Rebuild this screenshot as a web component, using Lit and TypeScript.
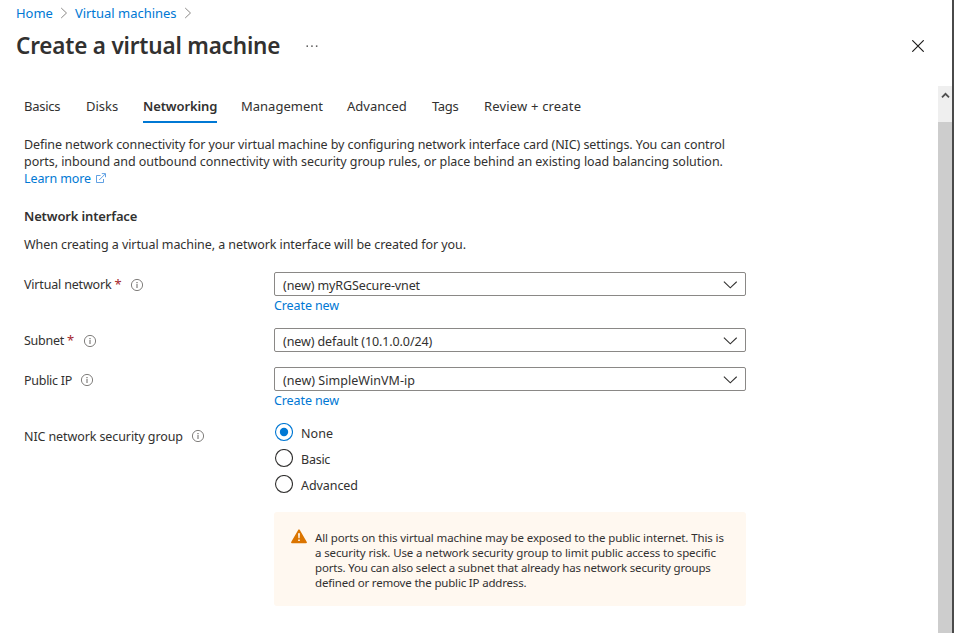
import { LitElement, html, css, svg, nothing } from "lit";

const infoIcon = html`<svg class="info" width="14" height="14" viewBox="0 0 14 14" aria-hidden="true">
  <circle cx="7" cy="7" r="5.6" fill="none" stroke="#7a7876" stroke-width="0.95"/>
  <rect x="6.5" y="4" width="1" height="1.2" fill="#55534f"/>
  <rect x="6.5" y="6" width="1" height="4" fill="#6b6967"/>
</svg>`;

const crumbChevron = html`<svg class="crumb-sep" width="8" height="12" viewBox="0 0 8 12" aria-hidden="true">
  <path d="M1.2 1 L6.5 6 L1.2 11" fill="none" stroke="#8a8886" stroke-width="1"/>
</svg>`;

const downChevron = html`<svg width="14" height="8" viewBox="0 0 14 8" aria-hidden="true">
  <path d="M0.9 0.7 L7.3 6.8 L13.7 0.7" fill="none" stroke="#323130" stroke-width="1.15"/>
</svg>`;

class FieldLabel extends LitElement {
  static properties = { text: {}, required: { type: Boolean }, tight: {} };
  static styles = css`
    :host { display: flex; align-items: center; height: 17px; line-height: 17px; white-space: nowrap; }
    .vnet { letter-spacing: -0.18px; }
    .subnet { letter-spacing: -0.25px; }
    .ip { letter-spacing: -0.27px; }
    .nsg { letter-spacing: -0.1px; }
    .star { color: #a4262c; margin-left: 3px; font-size: 13px; width: 7px; }
    .info { margin-left: 8px; display: block; }
    .star + .info { margin-left: 9px; }
    .ip + .info, .nsg + .info { margin-top: -1px; }
  `;
  declare text: string;
  declare required: boolean;
  declare tight: string;
  render() {
    return html`<span class=${this.tight}>${this.text}</span>${this.required ? html`<span class="star">*</span>` : nothing}${infoIcon}`;
  }
}
customElements.define("field-label", FieldLabel);

class AppRoot extends LitElement {
  static styles = css`
    :host {
      display: block; width: 954px; height: 633px; overflow: hidden; background: #fff;
      font: 12.5px/17px "Noto Sans", "Open Sans", sans-serif; color: #323130;
      letter-spacing: -0.07px;
    }
    * { box-sizing: border-box; }
    svg { display: block; flex: none; }
    .window { height: 633px; border-right: 2px solid #4a4a4a; display: flex; flex-direction: column; white-space: nowrap; }
    .top { height: 86px; flex: none; padding: 5px 28px 0 16px; }
    a { color: #0078d4; text-decoration: none; }
    .crumbs { display: flex; align-items: center; height: 16px; font-size: 13px; line-height: 16px; letter-spacing: -0.02px; }
    .crumb-sep { margin: 0 7px; }
    .titlebar { display: flex; align-items: center; height: 30px; margin-top: 10px; }
    h1 { margin: 0; font-size: 22.5px; line-height: 30px; font-weight: 600; letter-spacing: -0.19px; width: 290px; }
    .close { margin-left: auto; }
    .body { flex: 1; display: flex; min-height: 0; }
    .content { flex: 1; padding: 11px 0 0 24px; }
    .bar { width: 14px; background: #cdcdcd; }
    .up { height: 36px; background: #efefef; padding: 5px 0 0 3px; }
    .tabs { display: flex; height: 26px; font-size: 13px; line-height: 18px; letter-spacing: 0; }
    .tab { height: 26px; margin-right: 25px; }
    .tab.basics { width: 37px; letter-spacing: -0.25px; }
    .tab.disks { width: 32px; }
    .tab.on { width: 74px; font-weight: 600; letter-spacing: -0.12px; border-bottom: 2px solid #0078d4; margin-right: 24px; }
    .tab.management { width: 82px; margin-right: 24px; }
    .tab.advanced { width: 60px; }
    .tab.tags { width: 27px; letter-spacing: -0.35px; }
    .tab.review { letter-spacing: 0.17px; }
    .intro { margin-top: 13px; letter-spacing: -0.09px; }
    .intro .second { letter-spacing: -0.05px; }
    .learn { display: flex; align-items: center; letter-spacing: -0.1px; }
    .learn svg { margin-left: 5px; }
    h2 { margin: 20px 0 0; font-size: 13px; line-height: 18px; font-weight: 600; letter-spacing: -0.15px; }
    .note { margin-top: 11px; }
    .row { display: flex; }
    .row.vnet { margin-top: 19px; height: 56px; }
    .row.subnet { height: 39px; }
    .row.ip { height: 56px; }
    field-label { width: 250px; margin-top: 4px; }
    .row.ip field-label, .row.nsg field-label { margin-top: 5px; }
    .field { width: 472px; }
    .select { height: 24px; border: 1px solid #8a8886; border-radius: 2px; padding: 4px 8px 0; display: flex; justify-content: space-between; letter-spacing: -0.11px; }
    .select svg { margin-top: 3.5px; }
    .select .wide { letter-spacing: 0.04px; }
    .create { display: block; margin-top: 1px; letter-spacing: -0.1px; }
    .radio { display: flex; height: 26px; }
    .radio .label { margin: 2px 0 0 8px; }
    .radio .roomy { letter-spacing: 0.05px; }
    .radio .close-set { letter-spacing: -0.25px; }
    .warn { margin-top: 11px; height: 94px; background: #fff8f0; border-radius: 3px; display: flex; padding: 18px 0 0 16px; font-size: 11.5px; line-height: 15px; letter-spacing: -0.12px; }
    .warn .text { margin-left: 8px; }
    .warn .tight { letter-spacing: -0.18px; }
    .warn svg { margin-top: -1px; }
  `;

  select(value: string, wide = false) {
    return html`<div class="select"><span class=${wide ? "wide" : ""}>${value}</span>${downChevron}</div>`;
  }

  radio(label: string, on: boolean, cls: string) {
    return html`<div class="radio">
      <svg width="19" height="19" viewBox="0 0 19 19">
        <circle cx="10" cy="9" r="8.5" fill="#fff" stroke=${on ? "#0078d4" : "#323130"} stroke-width="1.1"/>
        ${on ? svg`<circle cx="10" cy="9" r="4.2" fill="#0078d4"/>` : nothing}
      </svg><span class="label ${cls}">${label}</span></div>`;
  }

  render() {
    return html`
      <div class="window">
        <div class="top">
          <nav class="crumbs"><a>Home</a>${crumbChevron}<a>Virtual machines</a>${crumbChevron}</nav>
          <div class="titlebar">
            <h1>Create a virtual machine</h1>
            <svg width="12" height="2" viewBox="0 0 12 2"><path d="M0.5 0.5h1.5v1.2h-1.5zM5.2 0.5h1.5v1.2h-1.5zM9.9 0.5h1.5v1.2h-1.5z" fill="#323130"/></svg>
            <svg class="close" width="12" height="12" viewBox="0 0 12 12"><path d="M0.3 0.3L11.7 11.7M11.7 0.3L0.3 11.7" stroke="#1b1a19" stroke-width="1.15"/></svg>
          </div>
        </div>
        <div class="body">
          <div class="content">
            <div class="tabs">
              <span class="tab basics">Basics</span><span class="tab disks">Disks</span><span class="tab on">Networking</span><span class="tab management">Management</span><span class="tab advanced">Advanced</span><span class="tab tags">Tags</span><span class="tab review">Review + create</span>
            </div>
            <div class="intro">
              <div>Define network connectivity for your virtual machine by configuring network interface card (NIC) settings. You can control</div>
              <div class="second">ports, inbound and outbound connectivity with security group rules, or place behind an existing load balancing solution.</div>
              <a class="learn">Learn more<svg width="10" height="11" viewBox="0 0 10 11"><path d="M4.5 2.5H0.5V9.5H7.5V6M3.2 7L9.2 1M5.8 0.6H9.5V4.2" fill="none" stroke="#4f96e0" stroke-width="0.9"/></svg></a>
            </div>
            <h2>Network interface</h2>
            <div class="note">When creating a virtual machine, a network interface will be created for you.</div>
            <div class="row vnet">
              <field-label text="Virtual network" tight="vnet" required></field-label>
              <div class="field">${this.select("(new) myRGSecure-vnet")}<a class="create">Create new</a></div>
            </div>
            <div class="row subnet">
              <field-label text="Subnet" tight="subnet" required></field-label>
              <div class="field">${this.select("(new) default (10.1.0.0/24)")}</div>
            </div>
            <div class="row ip">
              <field-label text="Public IP" tight="ip"></field-label>
              <div class="field">${this.select("(new) SimpleWinVM-ip", true)}<a class="create">Create new</a></div>
            </div>
            <div class="row nsg">
              <field-label text="NIC network security group" tight="nsg"></field-label>
              <div class="field">
                ${this.radio("None", true, "roomy")}${this.radio("Basic", false, "close-set")}${this.radio("Advanced", false, "")}
                <div class="warn">
                  <svg width="17" height="15" viewBox="0 0 17 15"><path d="M9 1.2L16.1 13.4H1.9Z" fill="#db7500" stroke="#db7500" stroke-width="1.6" stroke-linejoin="round"/><path d="M8.1 4.3h1.8l-.3 5h-1.2zM8.2 10.5h1.6v1.6h-1.6z" fill="#fff"/></svg>
                  <div class="text">
                    <div>All ports on this virtual machine may be exposed to the public internet. This is</div>
                    <div>a security risk. Use a network security group to limit public access to specific</div>
                    <div class="tight">ports. You can also select a subnet that already has network security groups</div>
                    <div class="tight">defined or remove the public IP address.</div>
                  </div>
                </div>
              </div>
            </div>
          </div>
          <div class="bar"><div class="up"><svg width="9" height="8" viewBox="0 0 9 8"><path d="M1 6.3L4.5 2.8L8 6.3" fill="none" stroke="#505050" stroke-width="1.8"/></svg></div></div>
        </div>
      </div>`;
  }
}
customElements.define("app-root", AppRoot);
